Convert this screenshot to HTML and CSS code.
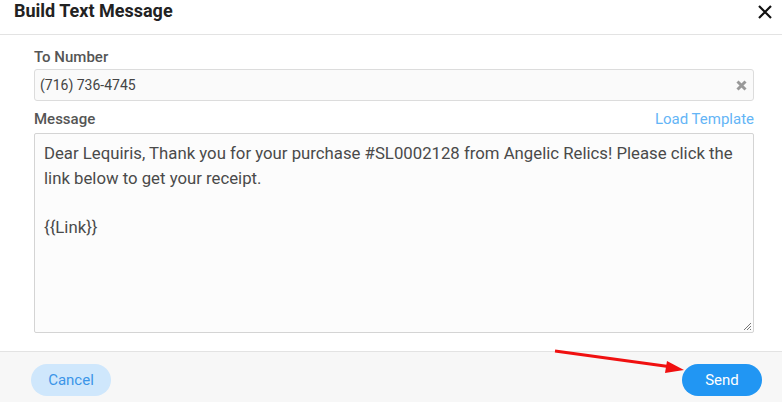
FILE: index.html
```html
<!DOCTYPE html>
<html>
<head>
<meta charset="utf-8">
<link rel="stylesheet" href="styles.css">
</head>
<body>
<div class="modal">
  <div class="header">
    <div class="title">Build Text Message</div>
    <svg class="close" width="14" height="14" viewBox="0 0 14 14"><path d="M1 1 L13 13 M13 1 L1 13" stroke="#111" stroke-width="2.2" fill="none"/></svg>
  </div>
  <div class="body">
    <div class="label-row"><span class="label">To Number</span></div>
    <div class="input">
      <span>(716) 736-4745</span>
      <svg class="clear" width="11" height="11" viewBox="0 0 11 11"><path d="M1.5 1.5 L9.5 9.5 M9.5 1.5 L1.5 9.5" stroke="#999" stroke-width="3" fill="none"/></svg>
    </div>
    <div class="label-row msg-row"><span class="label">Message</span><span class="link">Load Template</span></div>
    <div class="textarea">
      <div>Dear Lequiris, Thank you for your purchase #SL0002128 from Angelic Relics! Please click the link below to get your receipt.</div>
      <div>&nbsp;</div>
      <div>{{Link}}</div>
      <svg class="grip" width="10" height="10" viewBox="0 0 10 10"><path d="M9 2 L2 9 M9 5 L5 9 M9 8 L8 9" stroke="#777" stroke-width="1" fill="none"/></svg>
    </div>
  </div>
  <div class="footer">
    <button class="btn cancel">Cancel</button>
    <button class="btn send">Send</button>
    <svg class="arrow" width="140" height="30" viewBox="0 0 140 30"><path d="M1 3 L118 19" stroke="#f01010" stroke-width="3" fill="none"/><path d="M130 22 L113 13 L111 25 Z" fill="#f01010"/></svg>
  </div>
</div>
</body>
</html>
```
FILE: styles.css
```css
* { box-sizing: border-box; }
html, body { margin: 0; padding: 0; background: #fff; }
body { font-family: Roboto, "Noto Sans", sans-serif; width: 782px; height: 402px; overflow: hidden; }
.modal { display: flex; flex-direction: column; height: 402px; }
.header { height: 35px; border-bottom: 1px solid #e3e3e3; display: flex; justify-content: space-between; align-items: flex-start; padding: 0 10px 0 14px; }
.title { font-size: 18px; font-weight: 700; color: #222; line-height: 22px; margin-top: 0; }
.close { margin-top: 5px; }
.body { padding: 11px 28px 0 34px; flex: 1; display: flex; flex-direction: column; }
.label-row { display: flex; justify-content: space-between; align-items: center; height: 22px; }
.label { font-size: 15px; font-weight: 500; color: #555; }
.link { font-size: 15px; color: #64b5f6; }
.input { margin-top: 1px; height: 32px; border: 1px solid #dcdcdc; border-radius: 3px; background: #fafafa; display: flex; align-items: center; justify-content: space-between; padding: 0 6px 0 5px; font-size: 14px; color: #444; }
.clear { margin-top: 1px; }
.msg-row { margin-top: 7px; }
.textarea { position: relative; margin-top: 3px; height: 200px; border: 1px solid #d4d4d4; border-radius: 2px; background: #fcfcfc; padding: 7px 6px 0 9px; font-size: 16.75px; line-height: 24.5px; color: #4a4a4a; }
.grip { position: absolute; right: 1px; bottom: 1px; }
.footer { position: relative; height: 51px; background: #f7f7f7; border-top: 1px solid #e3e3e3; display: flex; justify-content: space-between; align-items: center; padding: 0 20px 4px 31px; }
.btn { width: 80px; height: 32px; border: none; border-radius: 16px; font-family: Roboto, sans-serif; font-size: 15px; margin-top: 10px; }
.cancel { background: #cfe7fc; color: #3b95e8; }
.send { background: #2196f3; color: #fff; }
.arrow { position: absolute; left: 554px; top: -4px; }
```
